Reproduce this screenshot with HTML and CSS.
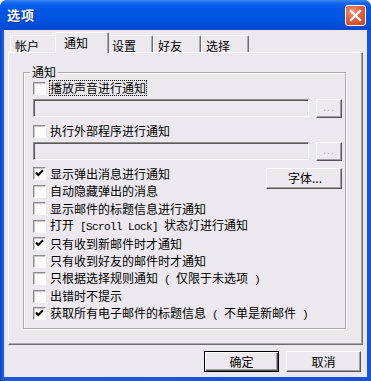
FILE: index.html
```html
<!DOCTYPE html>
<html lang="zh-CN">
<head>
<meta charset="utf-8">
<title>选项</title>
<link rel="stylesheet" href="styles.css">
</head>
<body>
<div class="window">
  <div class="titlebar">
    <span class="title">选项</span>
    <span class="close"><svg width="13" height="13" viewBox="0 0 13 13"><path d="M2 2 L11 11 M11 2 L2 11" stroke="#fff" stroke-width="2.2" stroke-linecap="square"/></svg></span>
  </div>
  <div class="client">
    <div class="tabs">
      <div class="tab w47">帐户</div>
      <div class="tab sel">通知</div>
      <div class="tab w46">设置</div>
      <div class="tab w48">好友</div>
      <div class="tab w48">选择</div>
    </div>
    <div class="panel">
      <div class="group">
        <span class="legend">通知</span>
        <div class="row first"><span class="cb"></span><span class="lbl focus">播放声音进行通知</span></div>
        <div class="fieldrow"><div class="field"></div><div class="btn dots disabled">...</div></div>
        <div class="row second"><span class="cb"></span><span class="lbl">执行外部程序进行通知</span></div>
        <div class="fieldrow"><div class="field"></div><div class="btn dots disabled">...</div></div>
        <div class="row third"><span class="cb checked"><svg width="11" height="11" viewBox="0 0 11 11"><path d="M2 4.5 L4.3 7 L9 2.3" fill="none" stroke="#000" stroke-width="2"/></svg></span><span class="lbl">显示弹出消息进行通知</span><span class="spacer"></span><div class="btn font">字体...</div></div>
        <div class="row"><span class="cb"></span><span class="lbl">自动隐藏弹出的消息</span></div>
        <div class="row"><span class="cb"></span><span class="lbl">显示邮件的标题信息进行通知</span></div>
        <div class="row"><span class="cb"></span><span class="lbl">打开<span class="mono"> [Scroll Lock] </span>状态灯进行通知</span></div>
        <div class="row"><span class="cb checked"><svg width="11" height="11" viewBox="0 0 11 11"><path d="M2 4.5 L4.3 7 L9 2.3" fill="none" stroke="#000" stroke-width="2"/></svg></span><span class="lbl">只有收到新邮件时才通知</span></div>
        <div class="row"><span class="cb"></span><span class="lbl">只有收到好友的邮件时才通知</span></div>
        <div class="row"><span class="cb"></span><span class="lbl">只根据选择规则通知<span class="mono"> ( </span>仅限于未选项<span class="mono"> )</span></span></div>
        <div class="row"><span class="cb"></span><span class="lbl">出错时不提示</span></div>
        <div class="row"><span class="cb checked"><svg width="11" height="11" viewBox="0 0 11 11"><path d="M2 4.5 L4.3 7 L9 2.3" fill="none" stroke="#000" stroke-width="2"/></svg></span><span class="lbl">获取所有电子邮件的标题信息<span class="mono"> ( </span>不单是新邮件<span class="mono"> )</span></span></div>
      </div>
    </div>
    <div class="actions">
      <div class="btn action default">确定</div>
      <div class="btn action">取消</div>
    </div>
  </div>
</div>
</body>
</html>
```

FILE: styles.css
```css
* { box-sizing: border-box; }
html, body { margin: 0; padding: 0; background: #ffffff; }
body {
  font-family: "Noto Sans CJK SC", "Liberation Sans", sans-serif;
  font-size: 12px;
  color: #000;
}
.window {
  width: 371px;
  height: 381px;
  background: linear-gradient(90deg, #0a3bc4 0, #1a5ae0 2px, #1652dc 100%);
  border-radius: 7px 7px 0 0;
  display: flex;
  flex-direction: column;
  overflow: hidden;
}
.titlebar {
  height: 30px;
  flex: 0 0 30px;
  background: linear-gradient(180deg, #3b86f0 0, #1266ec 3px, #0057e6 8px, #0156e4 50%, #0050dd 80%, #0446cd 100%);
  display: flex;
  align-items: center;
  padding: 0 5px 0 7px;
}
.title {
  color: #fff;
  font-weight: bold;
  font-size: 13px;
  line-height: 16px;
  text-shadow: 1px 1px 0 #0a2a8c;
  letter-spacing: 1px;
  flex: 1;
}
.close {
  width: 21px;
  height: 21px;
  border: 1px solid #fff;
  border-radius: 3px;
  background: radial-gradient(circle at 35% 30%, #f19a7e 0, #e0603f 45%, #c5401f 100%);
  display: flex;
  align-items: center;
  justify-content: center;
}
.client {
  flex: 1;
  margin: 0 4px 4px 4px;
  background: #ebe9ed;
  display: flex;
  flex-direction: column;
}
.tabs {
  margin-top: 2px;
  height: 20px;
  padding-left: 6px;
  display: flex;
  align-items: flex-end;
}
.tab {
  height: 17px;
  padding: 2px 0 0 4px;
  line-height: 16px;
  border-top: 1px solid #fff;
  border-left: 1px solid #fff;
  border-right: 1px solid #6e6e6e;
  box-shadow: inset -1px 0 0 #a8a8a8;
  border-radius: 2px 2px 0 0;
  background: #ebe9ed;
}
.w47 { width: 47px; }
.w46 { width: 46px; }
.w48 { width: 48px; }
.tab.sel {
  width: 54px;
  height: 21px;
  margin: 0 -2px -1px -2px;
  padding-left: 8px;
  position: relative;
  z-index: 1;
}
.panel {
  margin-left: 4px;
  width: 355px;
  height: 293px;
  border-top: 1px solid #fff;
  border-left: 1px solid #fff;
  border-right: 1px solid #6e6e6e;
  border-bottom: 1px solid #6e6e6e;
  box-shadow: inset -1px -1px 0 #a8a8a8;
  padding: 19px 0 0 14px;
}
.group {
  position: relative;
  width: 323px;
  height: 257px;
  border: 1px solid #aca8b0;
  box-shadow: inset 1px 1px 0 #fff, 1px 1px 0 #fff;
  padding: 6px 3px 0 9px;
  display: flex;
  flex-direction: column;
}
.legend {
  position: absolute;
  top: -8px;
  left: 6px;
  padding: 0 2px;
  line-height: 14px;
  background: #ebe9ed;
}
.row {
  height: 17.5px;
  flex: 0 0 17.5px;
  display: flex;
  align-items: center;
}
.row.first { height: 18px; flex-basis: 18px; }
.row.second { height: 18px; flex-basis: 18px; margin-top: 4px; }
.row.third { margin-top: 4px; align-items: center; }
.cb {
  width: 13px;
  height: 13px;
  flex: 0 0 13px;
  border-top: 1px solid #8a8a8a;
  border-left: 1px solid #8a8a8a;
  border-right: 1px solid #fdfdfd;
  border-bottom: 1px solid #fdfdfd;
  box-shadow: inset 1px 1px 0 #c9c7cb;
  background: #fbfbfb;
  display: flex;
  align-items: center;
  justify-content: center;
  margin-right: 4px;
}
.cb svg { display: block; }
.lbl {
  line-height: 14px;
  white-space: nowrap;
}
.focus { outline: 1px dotted #000; outline-offset: 0; }
.mono {
  font-family: "Liberation Mono", monospace;
  font-size: 11px;
  letter-spacing: -0.6px;
  white-space: pre;
}
.spacer { flex: 1; }
.fieldrow {
  margin-top: 2px;
  height: 19px;
  flex: 0 0 19px;
  display: flex;
  gap: 7px;
  align-items: flex-start;
}
.field {
  width: 277px;
  height: 18px;
  border-top: 1px solid #8a8a8a;
  border-left: 1px solid #8a8a8a;
  border-right: 1px solid #fff;
  border-bottom: 1px solid #fff;
  box-shadow: inset 1px 1px 0 #5a5a5a, inset -1px -1px 0 #e4e2e6;
  background: #ebe9ed;
}
.btn {
  display: flex;
  align-items: center;
  justify-content: center;
  background: #ebe9ed;
  border-top: 1px solid #fff;
  border-left: 1px solid #fff;
  border-right: 1px solid #555;
  border-bottom: 1px solid #555;
  box-shadow: inset -1px -1px 0 #a0a0a0;
  line-height: 14px;
}
.btn.dots {
  width: 26px;
  height: 19px;
  font-family: "Liberation Sans", sans-serif;
  font-size: 11px;
  padding-bottom: 3px;
  letter-spacing: 1px;
}
.disabled {
  color: #a7a6aa;
  text-shadow: 1px 1px 0 #fff;
}
.btn.font {
  width: 76px;
  height: 21px;
  margin-top: 6px;
  margin-bottom: -3px;
  padding-left: 2px;
}
.actions {
  margin-top: 6px;
  padding-right: 6px;
  display: flex;
  justify-content: flex-end;
  gap: 7px;
}
.btn.action {
  width: 75px;
  height: 21px;
}
.btn.default {
  border: 1px solid #000;
  box-shadow: inset 1px 1px 0 #fff, inset -1px -1px 0 #555, inset -2px -2px 0 #a0a0a0;
}
```
